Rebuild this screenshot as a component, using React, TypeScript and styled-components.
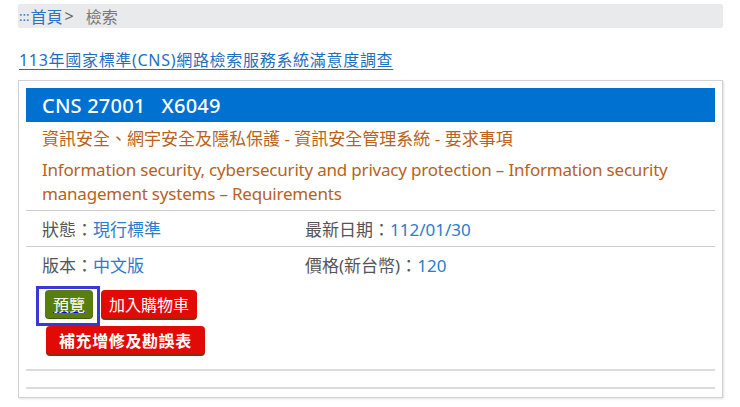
import React from "react";
import styled, { createGlobalStyle } from "styled-components";

const GlobalStyle = createGlobalStyle`
  html, body { margin: 0; padding: 0; background: #ffffff; }
  body {
    font-family: "Noto Sans", "Noto Sans CJK TC", sans-serif;
    color: #555;
  }
`;

const Page = styled.div`
  width: 705px;
  padding: 4px 17px 10px 18px;
`;

const Breadcrumb = styled.nav`
  display: flex;
  align-items: center;
  height: 24px;
  padding-left: 1px;
  background: #e9eaec;
  border-radius: 2px;
  font-size: 16px;
  color: #777;
`;

const Dots = styled.span`
  color: #2a72c5;
  font-size: 13px;
  letter-spacing: 0;
  margin-right: 1px;
`;

const HomeLink = styled.a`
  color: #2a72c5;
  text-decoration: none;
`;

const Sep = styled.span`
  margin: 0 12px 0 2px;
  color: #666;
`;

const Survey = styled.a`
  display: inline-block;
  margin: 20px 0 0 1px;
  font-size: 16px;
  line-height: 24px;
  letter-spacing: 0.7px;
  color: #1f6fc0;
  text-decoration: underline;
  text-underline-offset: 3px;
`;

const Card = styled.section`
  margin-top: 8px;
  border: 1px solid #d2d2d2;
  box-shadow: 1px 1px 2px rgba(0, 0, 0, 0.12);
  padding: 7px 7px 8px 7px;
`;

const Header = styled.h2`
  margin: 0;
  height: 34px;
  display: flex;
  align-items: center;
  padding-left: 16px;
  background: #0070d1;
  color: #ffffff;
  font-size: 20px;
  font-weight: 500;
  letter-spacing: 0.2px;
  white-space: pre;
`;

const TitleBlock = styled.div`
  padding: 5px 16px 4px 16px;
  color: #b8621b;
  font-size: 17px;
  line-height: 24px;
`;

const ZhTitle = styled.p`
  margin: 0 0 7px 0;
`;

const EnTitle = styled.p`
  margin: 0;
  letter-spacing: -0.2px;
`;

const InfoRow = styled.div`
  display: grid;
  grid-template-columns: 263px 1fr;
  align-items: center;
  height: 35px;
  padding-left: 16px;
  border-top: 1px solid #cccccc;
  font-size: 17px;
  color: #555;
`;

const Value = styled.span`
  color: #2a7dc9;
`;

const Actions = styled.div`
  display: flex;
  flex-direction: column;
  align-items: flex-start;
  gap: 0;
  padding: 4px 0 15px 10px;
`;

const ButtonLine = styled.div`
  display: flex;
  align-items: flex-start;
  gap: 1px;
`;

const FocusWrap = styled.a`
  display: inline-flex;
  padding: 1px 4px 5px 6px;
  outline: 3px solid #3838d4;
  outline-offset: -3px;
  border: 3px solid transparent;
`;

const Btn = styled.span<{ $tone: "green" | "red"; $bold?: boolean }>`
  display: inline-flex;
  align-items: center;
  height: 28px;
  padding: 0 ${(p) => (p.$bold ? "13px" : "8px")};
  border-radius: 4px;
  font-size: 16px;
  font-weight: ${(p) => (p.$bold ? 700 : 400)};
  letter-spacing: ${(p) => (p.$bold ? "0.6px" : "0")};
  color: #ffffff;
  background: ${(p) => (p.$tone === "green" ? "#5a7d10" : "#e20a06")};
  box-shadow: ${(p) =>
    p.$tone === "green" ? "0 1px 0 #3f5a08" : "0 2px 0 #8f2a0a"};
`;

const CartBtn = styled(Btn)`
  margin-top: 4px;
`;

const ErrataBtn = styled(Btn)`
  margin-left: 10px;
`;

const Rule = styled.div`
  height: 2px;
  background: #dcdcdc;
  margin-bottom: 16px;
  &:last-child { margin-bottom: 0; }
`;

export default function App() {
  return (
    <>
      <GlobalStyle />
      <Page>
        <Breadcrumb>
          <Dots>:::</Dots>
          <HomeLink href="#">首頁</HomeLink>
          <Sep>&gt;</Sep>
          <span>檢索</span>
        </Breadcrumb>
        <Survey href="#">113年國家標準(CNS)網路檢索服務系統滿意度調查</Survey>
        <Card>
          <Header>{"CNS 27001   X6049"}</Header>
          <TitleBlock>
            <ZhTitle>資訊安全、網宇安全及隱私保護 - 資訊安全管理系統 - 要求事項</ZhTitle>
            <EnTitle>
              Information security, cybersecurity and privacy protection – Information security
              management systems – Requirements
            </EnTitle>
          </TitleBlock>
          <InfoRow>
            <span>狀態：<Value>現行標準</Value></span>
            <span>最新日期：<Value>112/01/30</Value></span>
          </InfoRow>
          <InfoRow>
            <span>版本：<Value>中文版</Value></span>
            <span>價格(新台幣)：<Value>120</Value></span>
          </InfoRow>
          <Actions>
            <ButtonLine>
              <FocusWrap href="#">
                <Btn $tone="green">預覽</Btn>
              </FocusWrap>
              <CartBtn $tone="red">加入購物車</CartBtn>
            </ButtonLine>
            <ErrataBtn $tone="red" $bold>補充增修及勘誤表</ErrataBtn>
          </Actions>
          <Rule />
          <Rule />
        </Card>
      </Page>
    </>
  );
}
